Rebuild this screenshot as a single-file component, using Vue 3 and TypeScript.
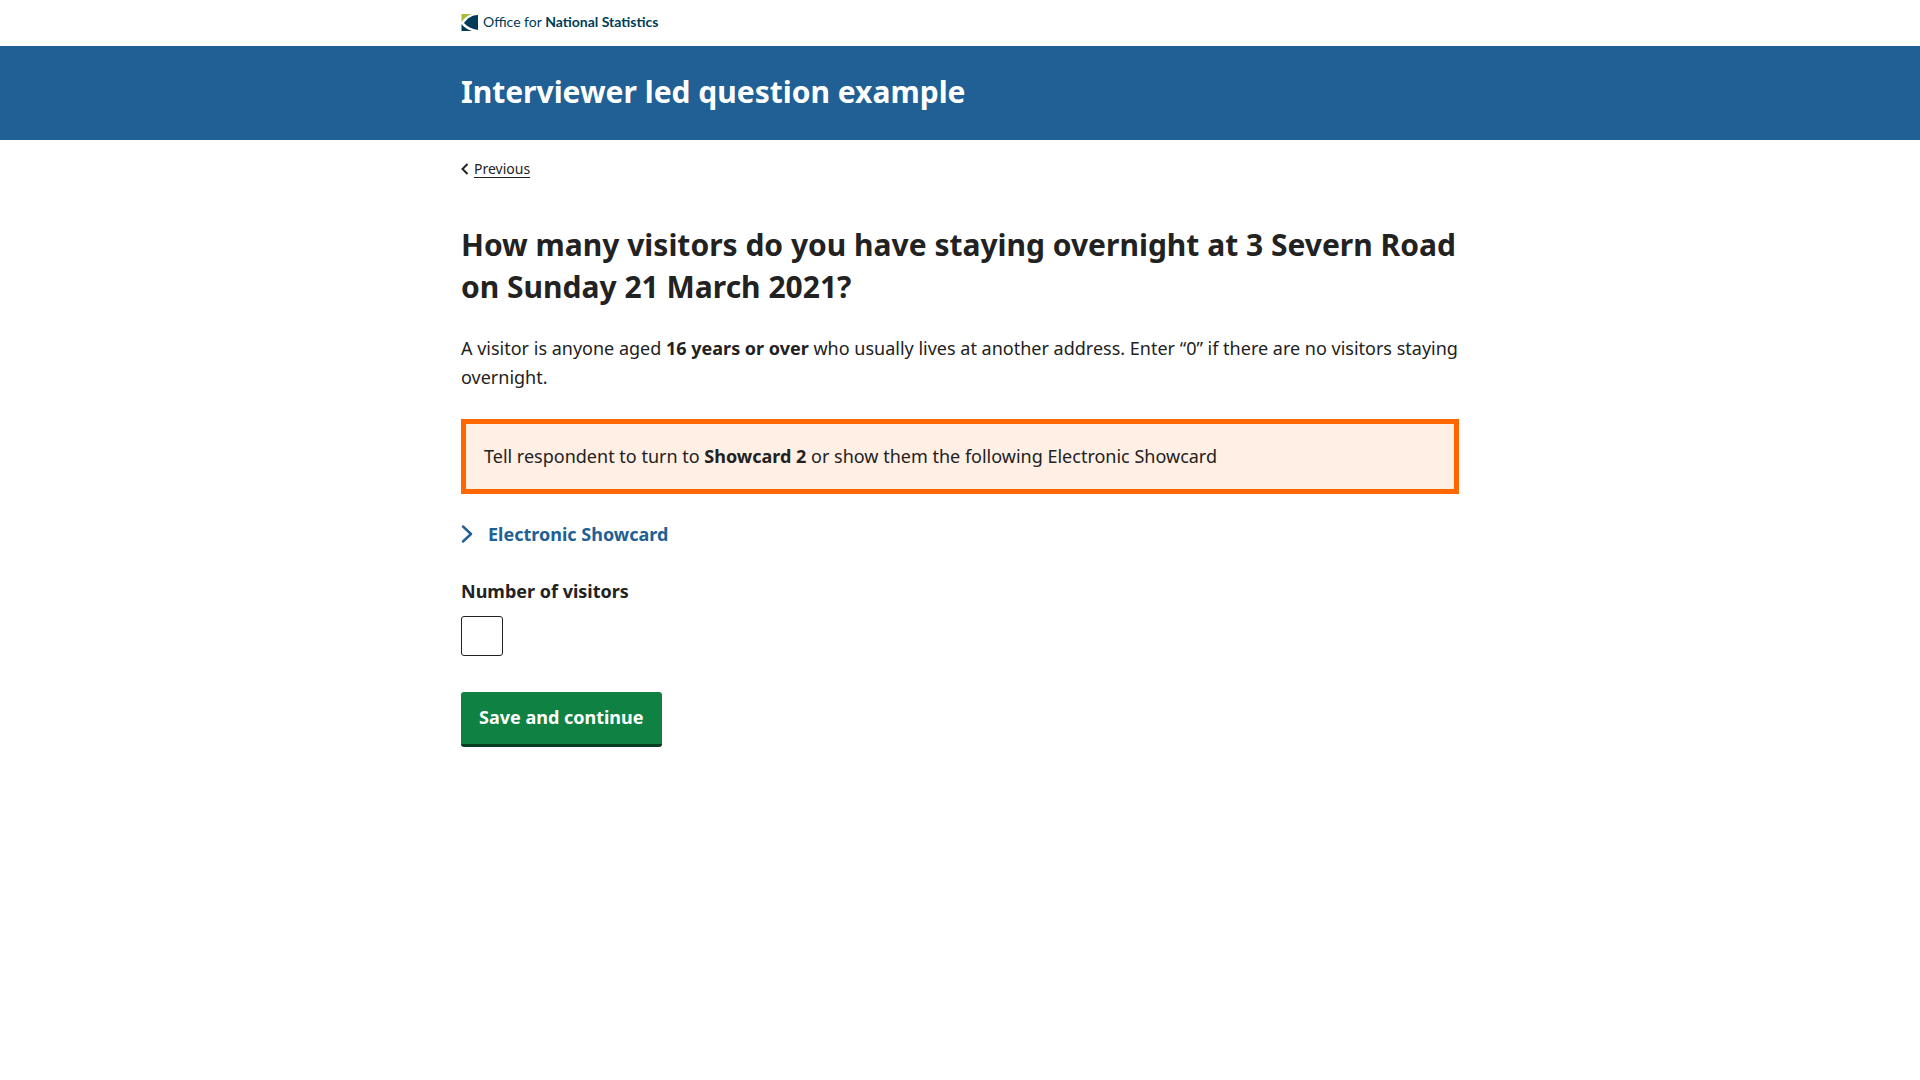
<script setup lang="ts">
import { ref } from 'vue'

const visitors = ref('')
const showcardOpen = ref(false)
</script>

<template>
  <div class="page">
    <header>
      <div class="brand-bar">
        <div class="container">
          <a class="brand" href="#" aria-label="Office for National Statistics">
            <svg class="brand-mark" viewBox="0 0 17 17" aria-hidden="true">
              <path d="M0.500 0H11C7 1.500 3.500 4 0.500 8Z" fill="#a8bd3a" />
              <path d="M17 1V16C11 15 6 12.500 3 9C6.500 4 11 1 17 1Z" fill="#003c57" />
              <path d="M0.500 10C3 13 6 15.500 11 17H0.500Z" fill="#003c57" />
            </svg>
            <span class="brand-name">Office for <strong>National Statistics</strong></span>
          </a>
        </div>
      </div>
      <div class="title-bar">
        <div class="container">
          <div class="title">Interviewer led question example</div>
        </div>
      </div>
    </header>

    <div class="container">
      <nav class="breadcrumb" aria-label="Back">
        <svg class="back-icon" viewBox="0 0 8 12" aria-hidden="true">
          <path d="M6.500 1L1.500 6L6.500 11" fill="none" stroke="#222" stroke-width="2" />
        </svg>
        <a class="back-link" href="#">Previous</a>
      </nav>

      <main>
        <form @submit.prevent>
          <h1>How many visitors do you have staying overnight at 3 Severn Road on Sunday 21 March 2021?</h1>
          <p class="description">
            A visitor is anyone aged <strong>16 years or over</strong> who usually lives at another address.
            Enter “0” if there are no visitors staying overnight.
          </p>
          <div class="interviewer-note">
            Tell respondent to turn to <strong>Showcard 2</strong> or show them the following Electronic Showcard
          </div>
          <button
            class="showcard-toggle"
            type="button"
            :aria-expanded="showcardOpen"
            @click="showcardOpen = !showcardOpen"
          >
            <svg class="chevron" :class="{ open: showcardOpen }" viewBox="0 0 12 20" aria-hidden="true">
              <path
                d="M2 1.500L10 9L2 16.500"
                fill="none"
                stroke="#206095"
                stroke-width="2.400"
                stroke-linecap="round"
                stroke-linejoin="round"
              />
            </svg>
            <span>Electronic Showcard</span>
          </button>
          <div class="field">
            <label for="visitors">Number of visitors</label>
            <input id="visitors" v-model="visitors" type="text" inputmode="numeric" maxlength="1" />
          </div>
          <button class="submit" type="submit">Save and continue</button>
        </form>
      </main>
    </div>
  </div>
</template>

<style>
body {
  margin: 0;
  background: #fff;
}
</style>

<style scoped>
.page {
  color: #222;
  font-family: "Noto Sans", "Open Sans", sans-serif;
  font-size: 18px;
  line-height: 29px;
}

.container {
  box-sizing: border-box;
  max-width: 1030px;
  margin: 0 auto;
  padding: 0 16px;
}

.brand-bar {
  padding: 10px 0 12px;
}

.brand {
  display: flex;
  align-items: center;
  gap: 5px;
  height: 24px;
  color: #003c57;
  text-decoration: none;
}

.brand-mark {
  width: 17px;
  height: 17px;
}

.brand-name {
  font-family: Lato, sans-serif;
  font-size: 14px;
  line-height: 24px;
}

.title-bar {
  padding: 25px 0 27px;
  background: #206095;
  color: #fff;
}

.title,
h1 {
  font-size: 30px;
  font-weight: 700;
  line-height: 42px;
}

.breadcrumb {
  display: flex;
  align-items: center;
  gap: 5px;
  padding: 18px 0 44px;
  font-size: 14px;
  line-height: 22px;
}

.back-icon {
  width: 8px;
  height: 12px;
}

.back-link {
  color: #222;
  text-decoration-thickness: 1px;
  text-underline-offset: 3px;
}

h1 {
  margin: 0 0 26px;
}

.description {
  margin: 0 0 27px;
}

.interviewer-note {
  margin-bottom: 26px;
  padding: 18px;
  border: 5px solid #fe6700;
  background: #ffefe4;
}

.showcard-toggle {
  display: flex;
  align-items: center;
  gap: 15px;
  margin: 0 0 28px;
  padding: 0;
  border: 0;
  background: none;
  color: #206095;
  font: inherit;
  font-weight: 700;
  cursor: pointer;
}

.chevron {
  width: 12px;
  height: 20px;
}

.chevron.open {
  transform: rotate(90deg);
}

.field {
  display: flex;
  flex-direction: column;
  align-items: flex-start;
  gap: 10px;
  margin-bottom: 36px;
}

label {
  font-weight: 700;
}

input {
  box-sizing: border-box;
  width: 42px;
  height: 40px;
  padding: 6px;
  border: 1px solid #222;
  border-radius: 3px;
  background: #fff;
  color: inherit;
  font: inherit;
}

.submit {
  display: block;
  padding: 11px 18px 12px;
  border: 0;
  border-bottom: 3px solid #073d20;
  border-radius: 3px;
  background: #0f8243;
  color: #fff;
  font: inherit;
  font-weight: 700;
  cursor: pointer;
}
</style>
